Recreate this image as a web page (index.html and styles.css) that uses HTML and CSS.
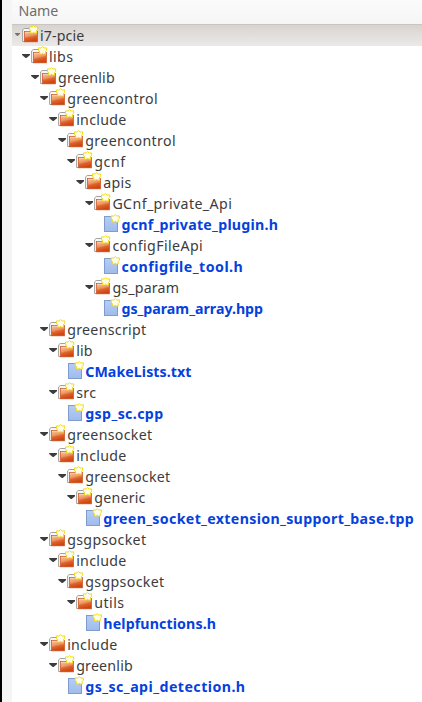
FILE: index.html
```html
<!DOCTYPE html>
<html lang="en">
<head>
<meta charset="utf-8">
<title>i7-pcie</title>
<link rel="stylesheet" href="styles.css">
</head>
<body>
<svg class="defs" aria-hidden="true">
  <defs>
    <linearGradient id="orange" x1="0" y1="0" x2="0.3" y2="1">
      <stop offset="0" stop-color="#f9cdab"/>
      <stop offset="0.5" stop-color="#ec9360"/>
      <stop offset="0.65" stop-color="#df642c"/>
      <stop offset="1" stop-color="#d2430f"/>
    </linearGradient>
    <linearGradient id="blue" x1="0" y1="0" x2="0" y2="1">
      <stop offset="0" stop-color="#b4cef8"/>
      <stop offset="1" stop-color="#a0bbea"/>
    </linearGradient>
    <path id="star" d="M11.6 .6 L13.1 2 L15.7 1.9 L15.7 4.2 L14.5 5.6 L14.5 8 L12.7 8 L11.6 7.3 L10.5 8 L8.7 8 L8.7 5.6 L7.5 4.2 L7.5 1.9 L10.1 2 Z" fill="#fffeee" stroke="#f2dc14" stroke-width="1"/>
    <symbol id="folder" viewBox="0 0 18 21">
      <path d="M.6 16.5 V4.9 L2.2 3.5 H8 V5.2 H14.5 V16.5 Z" fill="#f8f8f7" stroke="#a3a09d"/>
      <rect x="2.5" y="6.5" width="13" height="10.3" fill="url(#orange)" stroke="#cc5b2c" stroke-width=".8"/>
      <path d="M3 7.4 H15" stroke="#f8d5bb" stroke-width=".7"/>
      <use href="#star"/>
    </symbol>
    <symbol id="file" viewBox="0 0 18 21">
      <rect x="1.5" y="2.5" width="13" height="15" fill="url(#blue)" stroke="#7f9cce"/>
      <use href="#star" x=".7"/>
    </symbol>
  </defs>
</svg>
<main class="panel">
  <header class="header">Name</header>
  <div class="tree" id="tree" role="tree"></div>
</main>
<script src="tree.js"></script>
</body>
</html>
```
FILE: styles.css
```css
* { box-sizing: border-box; }
body {
  margin: 0;
  width: 422px;
  height: 702px;
  overflow: hidden;
  background: #fff;
  font-family: "Noto Sans", "Open Sans", sans-serif;
  font-size: 14.2px;
  color: #3c3c3c;
}
.defs { position: absolute; width: 0; height: 0; }
.panel {
  height: 702px;
  border-left: 2px solid #000;
  padding-left: 10px;
  background: linear-gradient(#f5f5f5, #f5f5f5) 0 0 / 10px 100% no-repeat;
}
.header {
  height: 24px;
  padding-left: 6.5px;
  line-height: 22px;
  letter-spacing: -0.1px;
  color: #6d6d6d;
  background: linear-gradient(#fbfbfb, #f5f5f5);
}
.row {
  display: flex;
  height: 21px;
  padding-left: calc(var(--level) * 9.05px);
}
.row.selected {
  height: 22px;
  border-top: 1px solid #c9c5c1;
  background: linear-gradient(#d8d3cf, #ebeae9);
}
.arrow {
  flex: none;
  width: 8px;
  height: 4px;
  margin: 8px 1px 0 1px;
  background: #3c3c3c;
  clip-path: polygon(0 0, 100% 0, 100% 25%, 55% 100%, 45% 100%, 0 25%);
}
.selected .arrow {
  width: 5px;
  height: 3px;
  margin: 8px 2px 0 3px;
  background: #77736f;
}
.leaf .arrow { visibility: hidden; }
.icon { flex: none; width: 18px; height: 21px; }
.label { white-space: nowrap; line-height: 21px; }
.leaf .label { font-weight: bold; color: #0541dd; }
```
FILE: tree.js
```js
// Each entry: depth, name, label width in pixels.
const entries = [
  [0, "i7-pcie", 44],
  [1, "libs", 24],
  [2, "greenlib", 56.5],
  [3, "greencontrol", 90.5],
  [4, "include", 50],
  [5, "greencontrol", 90.5],
  [6, "gcnf", 31],
  [7, "apis", 28],
  [8, "GCnf_private_Api", 119.5],
  [9, "gcnf_private_plugin.h", 156.5],
  [8, "configFileApi", 90.5],
  [9, "configfile_tool.h", 121.5],
  [8, "gs_param", 66.5],
  [9, "gs_param_array.hpp", 141.3],
  [3, "greenscript", 79],
  [4, "lib", 16],
  [5, "CMakeLists.txt", 106],
  [4, "src", 20],
  [5, "gsp_sc.cpp", 78],
  [3, "greensocket", 85],
  [4, "include", 50],
  [5, "greensocket", 85],
  [6, "generic", 51],
  [7, "green_socket_extension_support_base.tpp", 310.5],
  [3, "gsgpsocket", 79],
  [4, "include", 50],
  [5, "gsgpsocket", 79],
  [6, "utils", 30],
  [7, "helpfunctions.h", 112.5],
  [3, "include", 50],
  [4, "greenlib", 56.5],
  [5, "gs_sc_api_detection.h", 160]
];

const tree = document.getElementById("tree");
entries.forEach(([level, name, width], i) => {
  const leaf = /\.\w+$/.test(name);
  const row = document.createElement("div");
  row.className = "row" + (leaf ? " leaf" : "") + (i === 0 ? " selected" : "");
  row.style.setProperty("--level", level);
  row.innerHTML = `<span class="arrow"></span><svg class="icon"><use href="#${leaf ? "file" : "folder"}"/></svg><span class="label">${name}</span>`;
  tree.append(row);
  const label = row.lastElementChild;
  const natural = label.getBoundingClientRect().width;
  label.style.letterSpacing = (width + 0.3 - natural) / name.length + "px";
});
```
